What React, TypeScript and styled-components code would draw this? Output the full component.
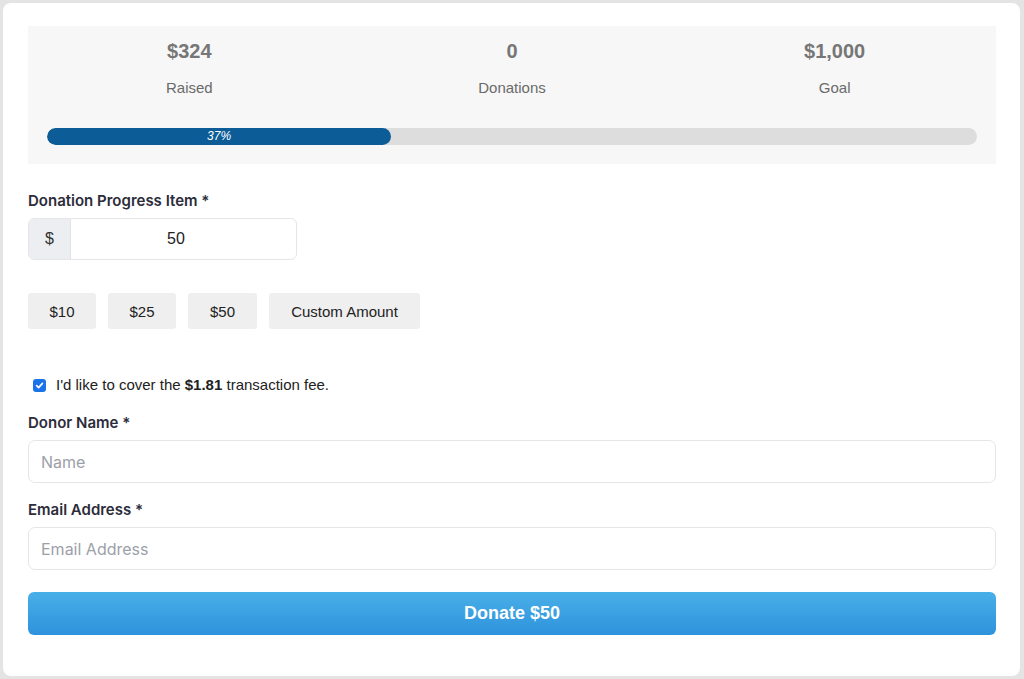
import React from "react";
import styled, { createGlobalStyle } from "styled-components";

const Global = createGlobalStyle`
  html, body { margin: 0; padding: 0; background: #e4e4e4; }
  body { font-family: "Liberation Sans", Arial, sans-serif; }
  * { box-sizing: border-box; }
`;

const Page = styled.div`
  padding: 3px 4px 3px 3px;
  height: 679px;
`;

const Card = styled.div`
  background: #ffffff;
  border-radius: 8px;
  height: 673px;
  padding: 23px 24px 0 25px;
  display: flex;
  flex-direction: column;
`;

const Stats = styled.div`
  background: #f7f7f7;
  padding: 13px 19px 19px;
  display: flex;
  flex-direction: column;
`;

const StatRow = styled.div`
  display: grid;
  grid-template-columns: repeat(3, 1fr);
  margin: 0 -19px;
`;

const Stat = styled.div`
  display: flex;
  flex-direction: column;
  align-items: center;
`;

const StatValue = styled.div`
  font-size: 20px;
  font-weight: 700;
  color: #767676;
  line-height: 24px;
`;

const StatLabel = styled.div`
  font-size: 15px;
  color: #6a6a6a;
  line-height: 18px;
  margin-top: 16px;
`;

const Track = styled.div`
  margin-top: 31px;
  height: 17px;
  border-radius: 9px;
  background: #dddddd;
  overflow: hidden;
`;

const Fill = styled.div`
  height: 100%;
  background: #0b5c97;
  border-radius: 9px;
  color: #ffffff;
  font-size: 12px;
  font-style: italic;
  line-height: 17px;
  text-align: center;
`;

const Label = styled.div<{ $top: number }>`
  font-family: Inter, "Liberation Sans", sans-serif;
  font-weight: 600;
  font-size: 15px;
  color: #2c2c3a;
  line-height: 18px;
  margin-top: ${(p) => p.$top}px;
`;

const InputGroup = styled.div`
  margin-top: 8px;
  width: 269px;
  height: 42px;
  display: flex;
  border: 1px solid #e4e6ea;
  border-radius: 6px;
  overflow: hidden;
`;

const Addon = styled.div`
  width: 42px;
  background: #eceef2;
  border-right: 1px solid #e1e3e7;
  display: flex;
  align-items: center;
  justify-content: center;
  font-size: 16px;
  color: #333;
`;

const AmountInput = styled.div`
  flex: 1;
  display: flex;
  align-items: center;
  justify-content: center;
  padding-right: 15px;
  font-size: 16px;
  color: #222;
`;

const Presets = styled.div`
  display: flex;
  gap: 12px;
  margin-top: 33px;
`;

const Preset = styled.button<{ $w: number }>`
  width: ${(p) => p.$w}px;
  height: 36px;
  border: none;
  border-radius: 3px;
  background: #efefef;
  font-family: "Liberation Sans", Arial, sans-serif;
  font-size: 15px;
  color: #222;
  padding: 0;
`;

const CheckRow = styled.label`
  display: flex;
  align-items: center;
  margin-top: 47px;
  padding-left: 5px;
  font-size: 15px;
  color: #222;
  line-height: 18px;
`;

const Check = styled.span`
  width: 13px;
  height: 13px;
  border-radius: 3px;
  background: #1a73e8;
  display: inline-flex;
  align-items: center;
  justify-content: center;
  margin-right: 10px;
`;

const TextField = styled.div`
  margin-top: 8px;
  height: 43px;
  border: 1px solid #e4e6ea;
  border-radius: 7px;
  display: flex;
  align-items: center;
  padding-left: 12px;
  font-family: Inter, "Liberation Sans", sans-serif;
  font-size: 16px;
  color: #9ca0a8;
`;

const Donate = styled.button`
  margin-top: 22px;
  height: 43px;
  border: none;
  border-radius: 6px;
  background: linear-gradient(#48b0e8, #2f92dc);
  color: #fff;
  font-family: "Liberation Sans", Arial, sans-serif;
  font-weight: 700;
  font-size: 18px;
  width: 100%;
`;

export default function App() {
  return (
    <Page>
      <Global />
      <Card>
        <Stats>
          <StatRow>
            <Stat>
              <StatValue>$324</StatValue>
              <StatLabel>Raised</StatLabel>
            </Stat>
            <Stat>
              <StatValue>0</StatValue>
              <StatLabel>Donations</StatLabel>
            </Stat>
            <Stat>
              <StatValue>$1,000</StatValue>
              <StatLabel>Goal</StatLabel>
            </Stat>
          </StatRow>
          <Track>
            <Fill style={{ width: "37%" }}>37%</Fill>
          </Track>
        </Stats>
        <Label $top={28}>Donation Progress Item *</Label>
        <InputGroup>
          <Addon>$</Addon>
          <AmountInput>50</AmountInput>
        </InputGroup>
        <Presets>
          <Preset $w={68}>$10</Preset>
          <Preset $w={68}>$25</Preset>
          <Preset $w={69}>$50</Preset>
          <Preset $w={151}>Custom Amount</Preset>
        </Presets>
        <CheckRow>
          <Check>
            <svg width="9" height="9" viewBox="0 0 10 10">
              <path d="M1.8 5.2 L4 7.3 L8.3 2.6" fill="none" stroke="#fff" strokeWidth="1.9" strokeLinecap="round" strokeLinejoin="round" />
            </svg>
          </Check>
          <span>
            I'd like to cover the <b>$1.81</b> transaction fee.
          </span>
        </CheckRow>
        <Label $top={20}>Donor Name *</Label>
        <TextField>Name</TextField>
        <Label $top={18}>Email Address *</Label>
        <TextField>Email Address</TextField>
        <Donate>Donate $50</Donate>
      </Card>
    </Page>
  );
}
